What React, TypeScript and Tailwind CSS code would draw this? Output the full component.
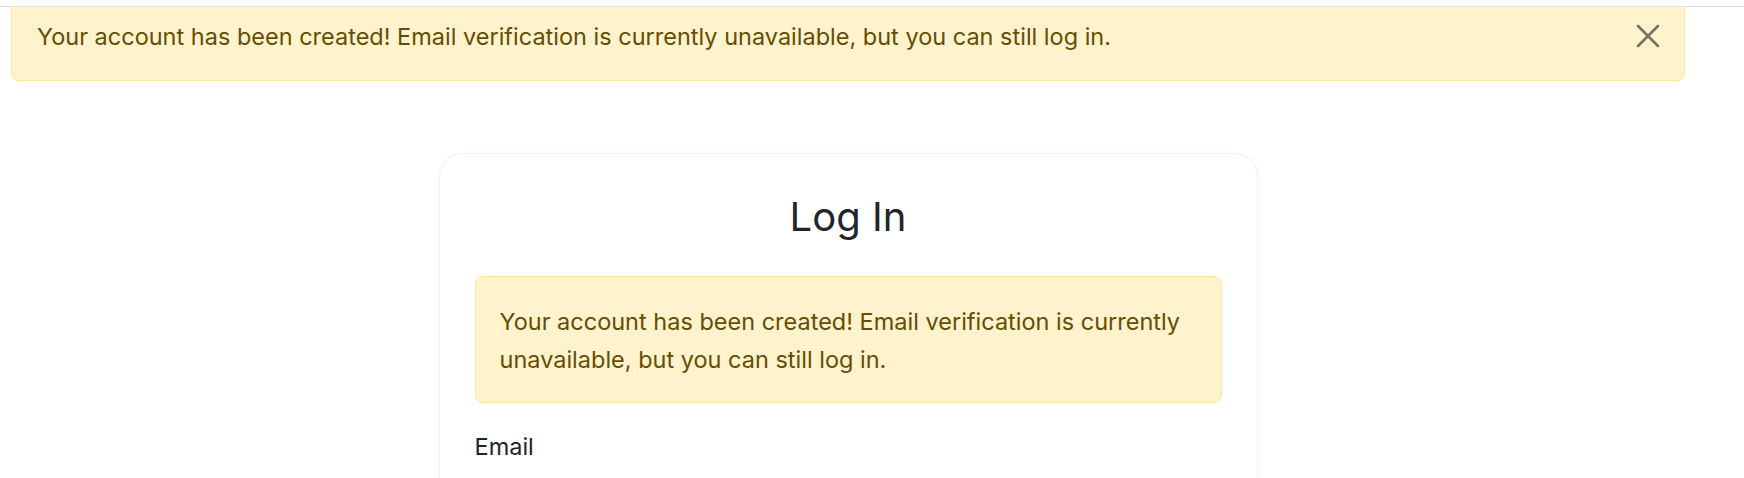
import React from "react";

export default function App() {
  return (
    <div
      className="min-h-[478px] w-full bg-white overflow-hidden"
      style={{ fontFamily: "Inter, 'Noto Sans', sans-serif" }}
    >
      <div className="h-[7px] border-b border-[#e2e2e2]" />
      <div className="w-[1696px]">
        <div className="mx-[11px] flex h-[74px] items-start justify-between rounded-b-[8px] border-x border-b border-[#ffe69c] bg-[#fff3cd] pl-[25px] pr-[24px] pt-[14px]">
          <p className="text-[23.5px] leading-[32px] text-[#664d03]">
            Your account has been created! Email verification is currently unavailable, but you can still log in.
          </p>
          <button className="mt-[3px] flex h-[24px] w-[24px] items-center justify-center" aria-label="Close">
            <svg width="24" height="24" viewBox="0 0 24 24" fill="none" stroke="#787260" strokeWidth="2.6" strokeLinecap="round">
              <path d="M2 2 L22 22 M22 2 L2 22" />
            </svg>
          </button>
        </div>

        <div className="mt-[72px] flex justify-center">
          <div className="w-[819px] rounded-[24px] border border-[#f2f2f2] bg-white px-[35px] pt-[35px] pb-10 shadow-[0_2px_10px_rgba(0,0,0,0.03)]">
            <h1 className="text-center text-[40px] leading-[56px] text-[#212529]">Log In</h1>
            <div className="mt-[31px] rounded-[8px] border border-[#ffe69c] bg-[#fff3cd] px-[24px] pt-[26px] pb-[23px] text-[23.5px] leading-[38px] text-[#664d03]">
              Your account has been created! Email verification is currently unavailable, but you can still log in.
            </div>
            <label className="mt-[28px] block text-[23.5px] leading-[32px] text-[#212529]">Email</label>
            <div className="mt-[15px] mx-[2px] h-[52px] rounded-[8px] border border-[#dee2e6]" />
          </div>
        </div>
      </div>
    </div>
  );
}
